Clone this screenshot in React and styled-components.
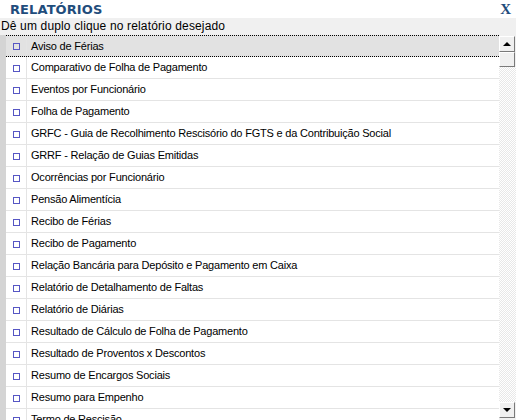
import React from "react";
import styled, { createGlobalStyle } from "styled-components";

const reports = [
  "Aviso de Férias",
  "Comparativo de Folha de Pagamento",
  "Eventos por Funcionário",
  "Folha de Pagamento",
  "GRFC - Guia de Recolhimento Rescisório do FGTS e da Contribuição Social",
  "GRRF - Relação de Guias Emitidas",
  "Ocorrências por Funcionário",
  "Pensão Alimentícia",
  "Recibo de Férias",
  "Recibo de Pagamento",
  "Relação Bancária para Depósito e Pagamento em Caixa",
  "Relatório de Detalhamento de Faltas",
  "Relatório de Diárias",
  "Resultado de Cálculo de Folha de Pagamento",
  "Resultado de Proventos x Descontos",
  "Resumo de Encargos Sociais",
  "Resumo para Empenho",
  "Termo de Rescisão",
];

export default function App() {
  return (
    <>
      <GlobalStyle />
      <StPanel>
        <StHeader>
          <StTitle>RELATÓRIOS</StTitle>
          <StClose>X</StClose>
        </StHeader>
        <StHint>Dê um duplo clique no relatório desejado</StHint>
        <StBody>
          <StStrip />
          <StList>
            {reports.map((name, i) => (
              <StRow key={name} $selected={i === 0}>
                <StIconCell>
                  <StBox />
                </StIconCell>
                <StLabel>{name}</StLabel>
              </StRow>
            ))}
          </StList>
          <StScroll>
            <StArrowBtn>
              <StArrow $up />
            </StArrowBtn>
            <StThumb />
            <StTrack />
            <StArrowBtn>
              <StArrow />
            </StArrowBtn>
          </StScroll>
        </StBody>
      </StPanel>
    </>
  );
}

const GlobalStyle = createGlobalStyle`
  body {
    margin: 0;
    background: #ffffff;
    overflow: hidden;
    font-family: "Liberation Sans", Arial, sans-serif;
  }
`;

const StPanel = styled.div`
  width: 516px;
  height: 420px;
  display: flex;
  flex-direction: column;
  overflow: hidden;
`;

const StHeader = styled.div`
  height: 18px;
  display: flex;
  align-items: center;
  justify-content: space-between;
  padding: 0 5px 0 10px;
  background: #ffffff;
`;

const StTitle = styled.span`
  font-family: "DejaVu Sans", sans-serif;
  font-weight: bold;
  font-size: 13px;
  letter-spacing: 0.1px;
  color: #1f4d7c;
`;

const StClose = styled.span`
  font-family: "Liberation Serif", serif;
  font-weight: bold;
  font-size: 15px;
  color: #1f4d7c;
`;

const StHint = styled.div`
  height: 17px;
  line-height: 17px;
  padding-left: 1px;
  background: #f0f0f0;
  font-size: 12px;
  letter-spacing: 0.15px;
  color: #000;
  white-space: nowrap;
`;

const StBody = styled.div`
  flex: 1;
  display: flex;
  min-height: 0;
  background: #f0f0f0;
`;

const StStrip = styled.div`
  width: 6px;
  background: #d4d4d4;
`;

const StList = styled.div`
  flex: 1;
  background: #ffffff;
  overflow: hidden;
`;

const StRow = styled.div`
  height: 22px;
  box-sizing: border-box;
  display: flex;
  align-items: center;
  border-bottom: 1px ${(p) => (p.$selected ? "dotted #000" : "solid #e4e4e4")};
  border-top: ${(p) => (p.$selected ? "1px dotted #000" : "none")};
  background: ${(p) => (p.$selected ? "#e2e2e2" : "#ffffff")};
`;

const StIconCell = styled.div`
  width: 20px;
  height: 100%;
  display: flex;
  align-items: center;
  justify-content: center;
  border-right: 1px solid #e4e4e4;
`;

const StBox = styled.div`
  width: 5px;
  height: 5px;
  border: 1px solid #5656c4;
  margin-top: 1px;
`;

const StLabel = styled.span`
  padding-left: 4px;
  padding-bottom: 1px;
  font-size: 11px;
  letter-spacing: -0.2px;
  color: #000;
  white-space: nowrap;
`;

const StScroll = styled.div`
  width: 17px;
  margin-top: 1px;
  display: flex;
  flex-direction: column;
  height: 382px;
`;

const StArrowBtn = styled.div`
  width: 16px;
  height: 16px;
  box-sizing: border-box;
  background: #f0f0f0;
  border: 1px solid;
  border-color: #ffffff #7a7a7a #7a7a7a #ffffff;
  display: flex;
  align-items: center;
  justify-content: center;
`;

const StArrow = styled.div`
  width: 0;
  height: 0;
  border-left: 4px solid transparent;
  border-right: 4px solid transparent;
  ${(p) =>
    p.$up ? "border-bottom: 4px solid #000;" : "border-top: 4px solid #000;"}
`;

const StThumb = styled(StArrowBtn)`
  height: 15px;
`;

const StTrack = styled.div`
  flex: 1;
  background-color: #ffffff;
  background-image: repeating-conic-gradient(#e8e8e8 0 25%, #ffffff 0 50%);
  background-size: 2px 2px;
`;
